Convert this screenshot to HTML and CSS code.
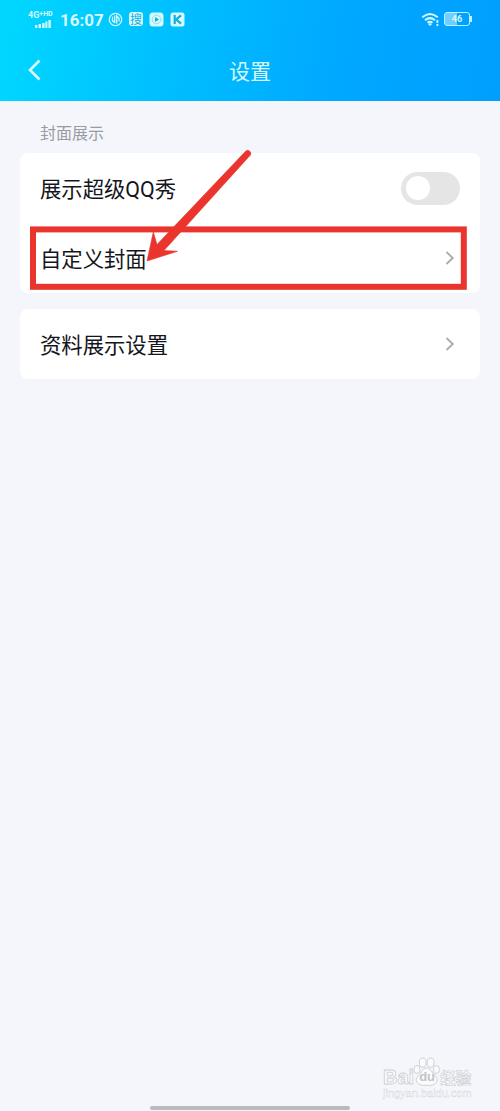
FILE: index.html
```html
<!DOCTYPE html>
<html lang="zh-CN">
<head>
<meta charset="utf-8">
<title>设置</title>
<link rel="stylesheet" href="styles.css">
</head>
<body>
<div class="screen">
  <header class="header">
    <div class="status">
      <div class="signal">
        <span class="network">4G<span class="hd">+HD</span></span>
        <svg class="bars" width="18" height="8" viewBox="0 0 18 8"><path d="M1 5h2.4v3H1zM4.6 4H7v4H4.6zM8.2 3h2.4v5H8.2zM11.4 1.5h2V8h-2zM14.4 0h2.4v8h-2.4z"/></svg>
      </div>
      <span class="time">16:07</span>
      <div class="apps">
        <svg width="15" height="15" viewBox="0 0 15 15"><circle cx="7.5" cy="7.5" r="6.2" class="line"/><path class="line" d="M4.5 4.8v3.4q0 1.8 2.2 1.8M6.7 3.5v7.8M8.7 11.5V3.7l2.3 2.5v3.2"/></svg>
        <span class="app-tile">搜</span>
        <svg width="15" height="15" viewBox="0 0 15 15"><rect x=".5" y=".5" width="14" height="14" rx="3.5"/><circle cx="7.5" cy="7.5" r="4.3" class="cut soft"/><path class="hole" d="M6 4.9v5.2l4-2.6z"/></svg>
        <svg width="15" height="15" viewBox="0 0 15 15"><rect x=".5" y=".5" width="14" height="14" rx="2.5"/><path class="cut thick" d="M4.7 3v9M11 3.3 6.2 7.5l4.8 4.2"/></svg>
      </div>
      <div class="system">
        <svg width="19" height="15" viewBox="0 0 19 15"><path class="wifi" d="M1.3 5.3Q9 -1.3 16.7 5.3M4 8.2q5-4.2 10 0M6.5 10.7q2.5-2 5 0"/><path d="m7 11.9 2 2.1 2-2.1q-2-1.4-4 0zM15.5 8h1.8v3h-1.8zM15.5 12h1.8v2h-1.8z"/></svg>
        <div class="battery"><span class="level">46</span></div>
      </div>
    </div>
    <div class="titlebar">
      <svg class="back" width="14" height="22" viewBox="0 0 14 22"><path d="M11.5 1.5 2 11l9.5 9.5"/></svg>
      <h1 class="title">设置</h1>
    </div>
  </header>
  <main class="content">
    <h2 class="section">封面展示</h2>
    <div class="card">
      <div class="row"><span class="label">展示超级QQ秀</span><span class="switch"></span></div>
      <div class="row"><span class="label">自定义封面</span><svg class="chevron" width="10" height="14" viewBox="0 0 10 14"><path d="m1.5 1 6.3 6-6.3 6"/></svg></div>
    </div>
    <div class="card">
      <div class="row"><span class="label">资料展示设置</span><svg class="chevron" width="10" height="14" viewBox="0 0 10 14"><path d="m1.5 1 6.3 6-6.3 6"/></svg></div>
    </div>
  </main>
  <svg class="annotation" width="500" height="320" viewBox="0 0 500 320">
    <rect x="33" y="229.4" width="430.8" height="57.4"/>
    <path class="head" d="M245.6 151.2A3.1 3.1 0 0 1 250.2 155.3L164 250.5 177.5 251.3 147 261 153.3 232 157 244.5z"/>
  </svg>
  <div class="watermark">
    <div class="brand"><span class="bai">Bai</span><span class="paw"><svg width="27" height="30" viewBox="0 0 27 30"><ellipse cx="4" cy="12.5" rx="3.1" ry="4"/><ellipse cx="9.7" cy="5.6" rx="3.4" ry="4.6"/><ellipse cx="17.6" cy="5.6" rx="3.4" ry="4.6"/><ellipse cx="23.4" cy="12.5" rx="3.1" ry="4"/><path d="M13.7 11c4 0 5 4.5 8 7.2 6 5.5.5 11.5-8 10-8.5 1.5-14-4.5-8-10 3-2.7 4-7.2 8-7.2z"/></svg><span class="du">du</span></span><span class="jy">经验</span></div>
    <div class="url">jingyan.baidu.com</div>
  </div>
  <div class="home"></div>
</div>
</body>
</html>
```
FILE: styles.css
```css
body { margin: 0; }
.screen {
  position: relative;
  height: 1111px;
  overflow: hidden;
  background: #f4f6fb;
  color: #15161c;
  font-family: "Noto Sans CJK SC", sans-serif;
}
.header {
  height: 101px;
  background: linear-gradient(100deg, #00d8ff 0%, #00bfff 34%, #00a7ff 70%, #009fff 100%);
}
.status {
  display: flex;
  align-items: center;
  box-sizing: border-box;
  height: 39px;
  padding: 0 28px;
  fill: #d6fbff;
  color: #d6fbff;
}
.signal { display: flex; flex-direction: column; width: 32px; align-items: flex-start; }
.network { display: flex; font: bold 9px/9px Roboto, sans-serif; white-space: nowrap; }
.hd { font-size: 7px; line-height: 7px; }
.bars { margin-left: 6px; }
.time { width: 48px; font: bold 17px/20px Roboto, sans-serif; }
.apps { display: flex; gap: 6px; }
.apps .line { fill: none; stroke: #d6fbff; stroke-width: 1.3; }
.cut { fill: none; stroke: #12aee0; stroke-width: 1; }
.cut.soft { stroke: #8fdcf3; }
.cut.thick { stroke-width: 2.2; }
.hole { fill: #12aee0; }
.app-tile {
  width: 14px;
  height: 14px;
  border-radius: 3px;
  background: #d6fbff;
  color: #12aee0;
  font-size: 12px;
  line-height: 14px;
  text-align: center;
}
.system { display: flex; align-items: center; gap: 4px; margin: 0 2px 1px auto; }
.wifi { fill: none; stroke: #d6fbff; stroke-width: 2; }
.battery {
  position: relative;
  box-sizing: border-box;
  width: 26px;
  height: 14px;
  border: 1.5px solid #bdf1ff;
  border-radius: 3px;
  background: linear-gradient(90deg, #70cfff 48%, transparent 48%);
}
.battery::after {
  content: "";
  position: absolute;
  top: 3px;
  right: -3px;
  width: 2px;
  height: 6px;
  background: #bdf1ff;
}
.level { display: block; font: bold 9px/12px Roboto, sans-serif; text-align: center; }
.titlebar {
  display: grid;
  grid-template-columns: 28px 1fr 28px;
  align-items: center;
  height: 62px;
  padding: 0 28px;
}
.back { fill: none; stroke: #d6fbff; stroke-width: 2.7; }
.title { margin: 0; color: #d6fbff; font-size: 21px; font-weight: 400; line-height: 30px; text-align: center; }
.content { padding: 19px 20px 0; }
.section { margin: 0 0 9px 20px; color: #989ba3; font-size: 16px; font-weight: 400; line-height: 24px; }
.card { margin-bottom: 16px; border-radius: 8px; background: #fff; }
.row {
  display: flex;
  align-items: center;
  justify-content: space-between;
  height: 70px;
  padding: 0 20px;
  font-family: Roboto, "Noto Sans CJK SC", sans-serif;
  font-size: 21.4px;
}
.label { padding-bottom: 2px; letter-spacing: -.05px; }
.switch { width: 59px; height: 33px; border-radius: 17px; background: #e5e5e5; }
.switch::before {
  content: "";
  display: block;
  width: 24px;
  height: 24px;
  margin: 4.5px;
  border-radius: 50%;
  background: #fff;
}
.chevron { margin: 0 5px 1px 0; fill: none; stroke: #aaa; stroke-width: 1.8; }
.annotation { position: absolute; top: 0; left: 0; fill: none; stroke: #e9352e; stroke-width: 6; }
.annotation .head { fill: #e9352e; stroke-width: .6; }
.watermark { position: absolute; top: 1056px; left: 383px; width: 92px; color: #fafbfd; font-family: "Liberation Sans", "Noto Sans CJK SC", sans-serif; }
.brand { display: flex; align-items: center; height: 31px; font-size: 20px; font-weight: bold; -webkit-text-stroke: .8px #cdcfd3; }
.bai { padding-top: 12px; }
.paw { position: relative; flex: none; width: 27px; height: 30px; margin-left: -1px; fill: #fafbfd; stroke: #cdcfd3; }
.paw svg { display: block; }
.du { position: absolute; top: 13px; left: 6px; color: #c2c4c8; font-size: 13px; line-height: 14px; -webkit-text-stroke: 0; }
.brand .jy { padding-top: 10px; font-size: 15.5px; white-space: nowrap; -webkit-text-stroke: .6px #c8cacf; }
.url { font-size: 11px; line-height: 13px; -webkit-text-stroke: .4px #d5d7dc; }
.home { position: absolute; top: 1106px; left: 150px; width: 200px; height: 4px; border-radius: 2px; background: #b9babd; }
```
